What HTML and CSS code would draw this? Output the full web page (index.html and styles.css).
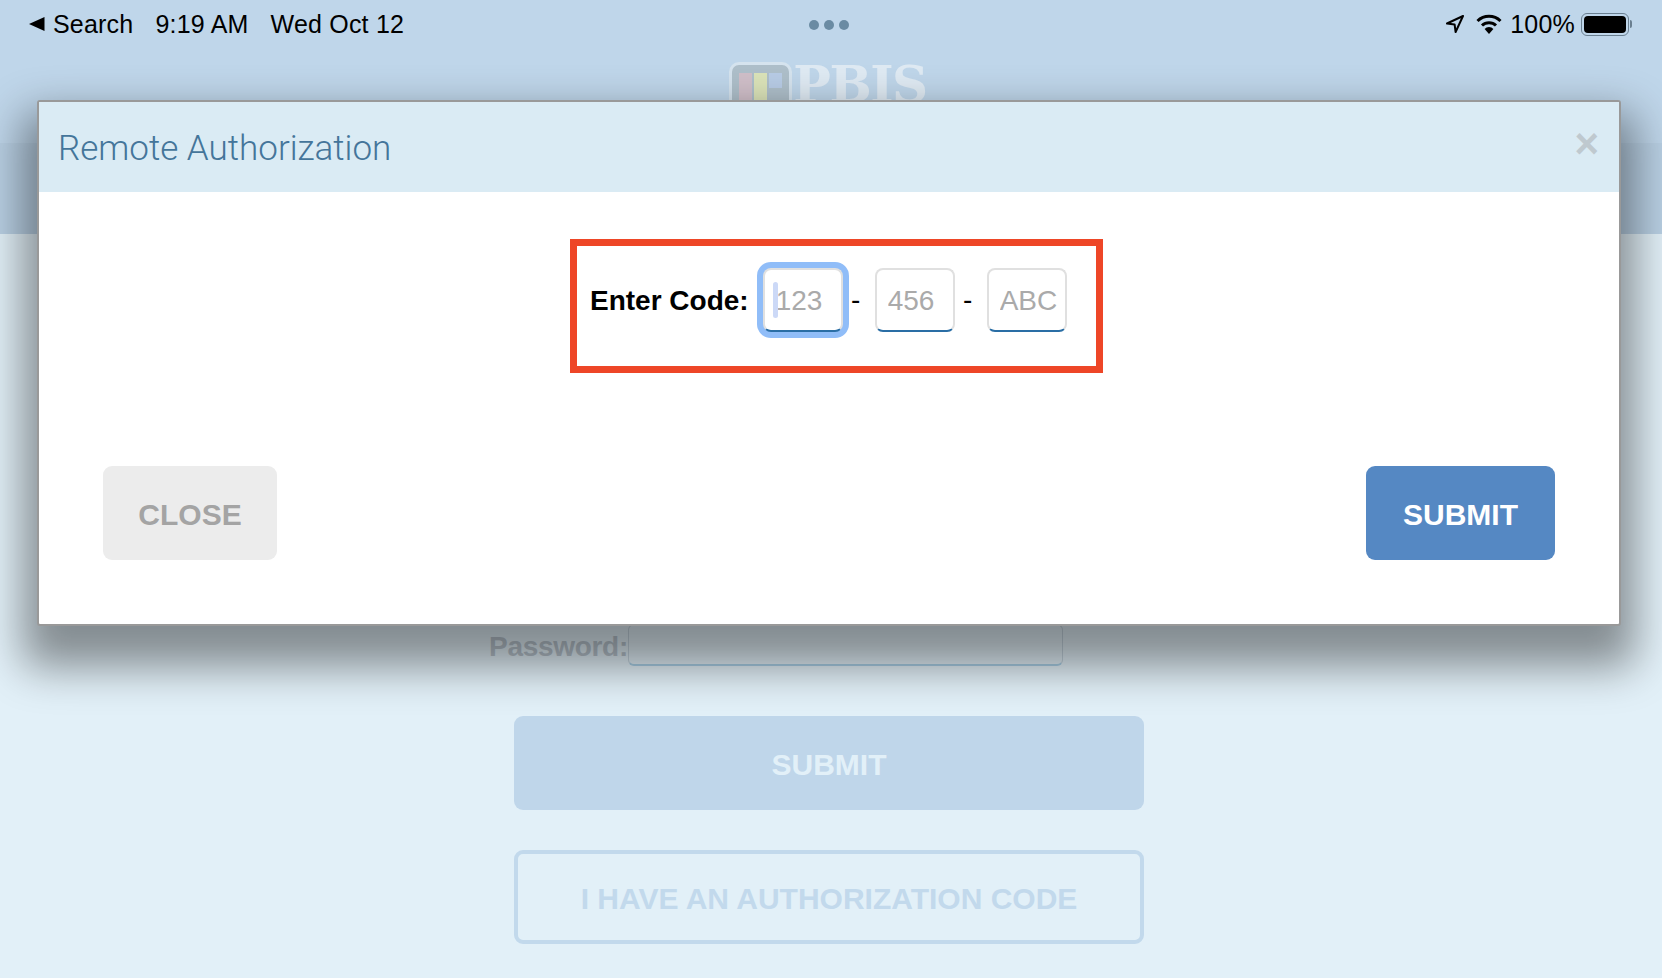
FILE: index.html
```html
<!DOCTYPE html>
<html lang="en">
<head>
    <meta charset="UTF-8">
    <title>PBIS</title>
    <link rel="stylesheet" href="styles.css">
</head>
<body>
    <!-- page behind the dialog -->
    <div class="top">
        <div class="status-bar">
            <div class="status-left">
                <svg class="back-arrow" width="16" height="14" viewBox="0 0 16 14"><path d="M0 7 L15.5 0 V14 Z" fill="#000"/></svg>
                <span class="back-label">Search</span>
                <span class="time">9:19 AM</span>
                <span>Wed Oct 12</span>
            </div>
            <div class="dots"><i></i><i></i><i></i></div>
            <div class="status-right">
                <svg width="18" height="18" viewBox="0 0 18 18"><path d="M17 1 L1 8.5 L8.6 9.4 L9.6 17 Z" fill="none" stroke="#000" stroke-width="2" stroke-linejoin="round"/></svg>
                <svg class="wifi" width="26" height="20" viewBox="0 0 26 20">
                    <path d="M1.5 7 A16.5 16.5 0 0 1 24.5 7" fill="none" stroke="#000" stroke-width="3"/>
                    <path d="M6 11.5 A10 10 0 0 1 20 11.5" fill="none" stroke="#000" stroke-width="3"/>
                    <path d="M13 20 L8.6 15 A6 6 0 0 1 17.4 15 Z" fill="#000"/>
                </svg>
                <span class="percent">100%</span>
                <div class="battery"><div class="battery-fill"></div></div>
                <div class="battery-nub"></div>
            </div>
        </div>
        <div class="logo">
            <div class="logo-icon"><i class="bar-pink"></i><i class="bar-yellow"></i><i class="bar-blue"></i></div>
            <span class="logo-text">PBIS</span>
        </div>
    </div>
    <div class="nav-band"></div>
    <div class="login-form">
        <div class="password-row">
            <label class="password-label">Password:</label>
            <div class="password-input"></div>
        </div>
        <button class="page-btn page-btn-solid">Submit</button>
        <button class="page-btn page-btn-outline">I have an authorization code</button>
    </div>

    <!-- dialog -->
    <div class="modal">
        <div class="modal-header">
            <h2 class="modal-title">Remote Authorization</h2>
            <span class="modal-close">×</span>
        </div>
        <div class="modal-body">
            <div class="code-box">
                <label class="code-label">Enter Code:</label>
                <div class="code-field">
                    <input class="code-input code-input-focus" placeholder="123">
                    <span class="caret"></span>
                </div>
                <span class="code-dash">-</span>
                <input class="code-input" placeholder="456">
                <span class="code-dash">-</span>
                <input class="code-input" placeholder="ABC">
            </div>
        </div>
        <div class="modal-footer">
            <button class="modal-btn modal-btn-close">Close</button>
            <button class="modal-btn modal-btn-submit">Submit</button>
        </div>
    </div>
</body>
</html>
```

FILE: styles.css
```css
:root {
    --page-bg: #e2f0f8;
    --pale-blue: #bfd6ea;
}

* {
    box-sizing: border-box;
}

body {
    margin: 0;
    height: 978px;
    overflow: hidden;
    position: relative;
    background: var(--page-bg);
    font-family: "Liberation Sans", Arial, sans-serif;
}

/* top of the page */
.top {
    height: 143px;
    background: var(--pale-blue);
}

.status-bar {
    display: grid;
    grid-template-columns: 1fr auto 1fr;
    align-items: center;
    height: 48px;
    padding: 0 30px 0 29px;
    font-size: 25px;
    letter-spacing: 0.2px;
    color: #000;
}

.status-left {
    display: flex;
    align-items: center;
}

.back-arrow {
    margin-right: 8px;
}

.back-label {
    margin-right: 22px;
}

.time {
    margin-right: 22px;
}

.dots {
    display: flex;
    gap: 5px;
    margin: 2px 4px 0 0;
}

.dots i {
    width: 10px;
    height: 10px;
    border-radius: 50%;
    background: #6a8ba3;
}

.status-right {
    display: flex;
    align-items: center;
    justify-content: flex-end;
}

.wifi {
    margin-left: 12px;
}

.percent {
    margin-left: 8px;
    margin-right: 6px;
}

.battery {
    width: 48px;
    height: 23px;
    padding: 2px;
    border: 1.5px solid #6a7f90;
    border-radius: 6px;
}

.battery-fill {
    height: 100%;
    border-radius: 4px;
    background: #000;
}

.battery-nub {
    width: 2px;
    height: 8px;
    margin-left: 1px;
    border-radius: 0 2px 2px 0;
    background: #6a7f90;
}

.logo {
    display: flex;
    justify-content: center;
    align-items: flex-start;
    gap: 1px;
    margin: 14px 6px 0 0;
}

.logo-icon {
    display: flex;
    align-items: flex-start;
    gap: 2px;
    width: 63px;
    height: 60px;
    padding: 8px 7px 0;
    border: 3px solid #d5e3ee;
    border-radius: 10px;
    background: #aebfca;
}

.logo-icon i {
    width: 13px;
}

.bar-pink {
    height: 40px;
    background: #d0bfc9;
}

.bar-yellow {
    height: 40px;
    background: #dbe3b9;
}

.bar-blue {
    height: 15px;
    background: #b8cce6;
}

.logo-text {
    font-family: "DejaVu Serif", serif;
    font-size: 50px;
    font-weight: bold;
    letter-spacing: -1.5px;
    line-height: 46px;
    color: #dfeaf3;
}

.nav-band {
    height: 91px;
    background: #b9d0e4;
}

/* login form behind the dialog */
.login-form {
    display: flex;
    flex-direction: column;
    align-items: center;
    padding: 390px 4px 0 0;
}

.password-row {
    display: flex;
    align-items: flex-end;
    width: 574px;
    height: 42px;
    margin-bottom: 50px;
    margin-left: -106px;
}

.password-label {
    font-size: 28px;
    font-weight: bold;
    letter-spacing: -0.3px;
    line-height: 38px;
    white-space: nowrap;
    color: #b8c4ce;
}

.password-input {
    width: 440px;
    height: 42px;
    border: 1px solid #c5d5e0;
    border-bottom: 2px solid #a9cfe6;
    border-radius: 6px;
}

.page-btn {
    width: 630px;
    height: 94px;
    padding-top: 4px;
    border-radius: 9px;
    font-family: inherit;
    font-size: 30px;
    font-weight: bold;
    text-transform: uppercase;
}

.page-btn-solid {
    margin-bottom: 40px;
    border: none;
    background: var(--pale-blue);
    color: var(--page-bg);
}

.page-btn-outline {
    border: 4px solid #c2d9ec;
    background: transparent;
    color: #c2d9ec;
}

/* dialog */
.modal {
    position: absolute;
    top: 100px;
    left: 37px;
    width: 1584px;
    height: 526px;
    display: flex;
    flex-direction: column;
    border: 2px solid #999;
    border-radius: 3px;
    background: #fff;
    box-shadow: 0 27px 44px 14px rgba(0,0,0,0.42);
}

.modal-header {
    display: flex;
    align-items: center;
    justify-content: space-between;
    height: 90px;
    padding: 2px 20px 0 19px;
    background: #daebf4;
}

.modal-title {
    margin: 0;
    font-family: Roboto, sans-serif;
    font-size: 35px;
    font-weight: 300;
    color: #44759a;
}

.modal-close {
    margin-bottom: 8px;
    font-size: 42px;
    font-weight: bold;
    line-height: 42px;
    color: #bfc9cf;
}

.modal-body {
    flex: 1;
    padding: 47px 0 0 531px;
}

.code-box {
    display: flex;
    align-items: flex-start;
    width: 533px;
    height: 134px;
    padding: 22px 0 0 13px;
    border: 7px solid #ee4627;
}

.code-label {
    margin-right: 14px;
    font-size: 28px;
    font-weight: bold;
    line-height: 66px;
    color: #000;
}

.code-field {
    position: relative;
}

.code-input {
    display: block;
    width: 80px;
    height: 64px;
    padding: 2px 0 0 11px;
    border: 2px solid #e0e0e0;
    border-bottom-color: #2a6ea5;
    border-radius: 8px;
    font-family: inherit;
    font-size: 28px;
    outline: none;
}

.code-input::placeholder {
    color: #aaa;
}

.code-input-focus {
    box-shadow: 0 0 0 6px #90bdf8;
}

.caret {
    position: absolute;
    top: 14px;
    left: 10px;
    width: 5px;
    height: 36px;
    border-radius: 3px;
    background: #ccd9f7;
}

.code-dash {
    width: 32px;
    padding-right: 6px;
    font-size: 28px;
    line-height: 64px;
    text-align: center;
    color: #000;
}

.modal-footer {
    display: flex;
    justify-content: space-between;
    padding: 0 64px 64px;
}

.modal-btn {
    height: 94px;
    padding-top: 4px;
    border: none;
    border-radius: 9px;
    font-family: inherit;
    font-size: 30px;
    font-weight: bold;
    text-transform: uppercase;
}

.modal-btn-close {
    width: 174px;
    background: #ececec;
    color: #a4a4a4;
}

.modal-btn-submit {
    width: 189px;
    background: #5588c3;
    color: #fff;
}
```
